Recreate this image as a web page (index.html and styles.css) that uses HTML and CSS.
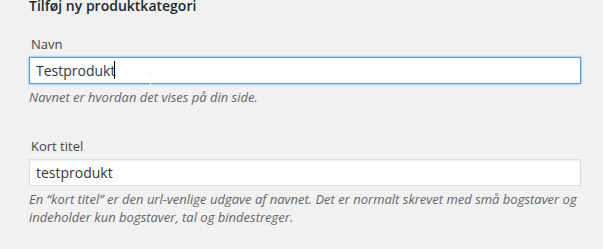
FILE: index.html
```html
<!DOCTYPE html>
<html lang="da">
<head>
  <meta charset="UTF-8">
  <title>Tilføj ny produktkategori</title>
  <link rel="stylesheet" href="styles.css">
</head>
<body>
  <div class="form-wrap">
    <h2>Tilføj ny produktkategori</h2>

    <div class="form-field">
      <label for="tag-name">Navn</label>
      <div class="field-box">
        <input id="tag-name" class="focused" type="text" value="Testprodukt">
        <span class="caret"></span>
        <svg class="ibeam" width="7" height="15" viewBox="0 0 7 15">
          <path d="M0 0.5h7M3.5 0.5v14.5" stroke="#f4f4f4" stroke-width="1" fill="none"/>
        </svg>
      </div>
      <p class="description">Navnet er hvordan det vises på din side.</p>
    </div>

    <div class="form-field">
      <label for="tag-slug">Kort titel</label>
      <div class="field-box">
        <input id="tag-slug" type="text" value="testprodukt">
      </div>
      <p class="description">En “kort titel” er den url-venlige udgave af navnet. Det er normalt skrevet med små bogstaver og indeholder kun bogstaver, tal og bindestreger.</p>
    </div>
  </div>
</body>
</html>
```

FILE: styles.css
```css
body {
  margin: 0;
  padding: 0;
  background-color: #f1f1f1;
  color: #444;
  font-family: "Open Sans", sans-serif;
  font-size: 13px;
}

.form-wrap {
  padding: 0 22px 0 29px;
  margin-top: -5px;
}

.form-wrap h2 {
  font-size: 14px;
  font-weight: 600;
  color: #23282d;
  margin: 0 0 18px;
  line-height: 22px;
}

.form-field {
  margin-bottom: 31px;
}

.form-field label {
  display: block;
  line-height: 18px;
  margin-bottom: 4px;
  padding-left: 2px;
}

.field-box {
  position: relative;
}

.form-field input {
  box-sizing: border-box;
  width: 100%;
  height: 27px;
  margin: 0;
  padding: 2px 6px;
  font-family: "Open Sans", sans-serif;
  font-size: 14px;
  color: #32373c;
  background-color: #fff;
  border: 1px solid #ddd;
  box-shadow: inset 0 1px 2px rgba(0, 0, 0, 0.07);
  outline: none;
}

.form-field input.focused {
  border-color: #5b9dd9;
  box-shadow: 0 0 2px rgba(30, 140, 190, 0.8);
}

.caret {
  position: absolute;
  left: 85px;
  top: 4px;
  width: 1px;
  height: 18px;
  background-color: #000;
}

.ibeam {
  position: absolute;
  left: 118px;
  top: 15px;
}

.description {
  margin: 4px 0 0;
  font-style: italic;
  color: #666;
  line-height: 18px;
}
```
